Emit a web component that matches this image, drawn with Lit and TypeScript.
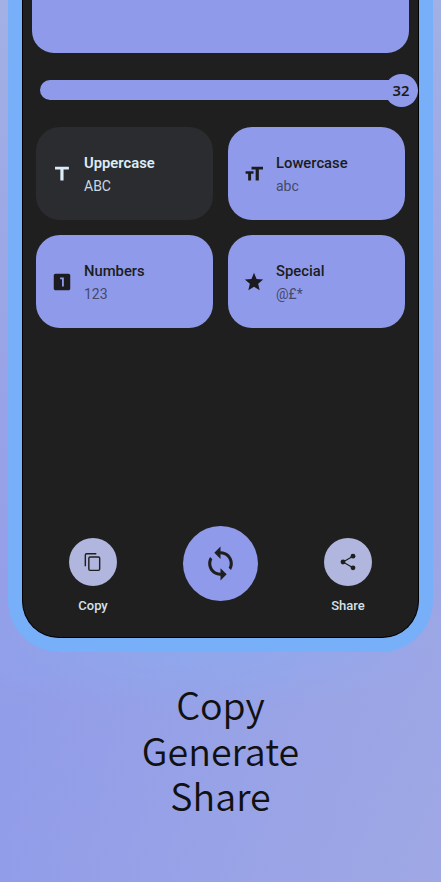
import { LitElement, html, css, svg } from "lit";
import { customElement, property } from "lit/decorators.js";

const icons: Record<string, unknown> = {
  title: svg`<path d="M4.400 4v3.200h5.800v12h3.500v-12h5.800V4z"/>`,
  size: svg`<path d="M9.300 4v3.200h4.500v12h3.500v-12h4.500V4H9.300zm-6.500 7.800h2.800v7.400h3.200v-7.400H11.500V9H2.800z"/>`,
  one: svg`<path d="M19 3H5c-1.100 0-2 .9-2 2v14c0 1.100.9 2 2 2h14c1.100 0 2-.9 2-2V5c0-1.100-.9-2-2-2zm-5 14h-2V9h-2V7h4v10z"/>`,
  star: svg`<path d="M12 17.270L18.180 21l-1.640-7.030L22 9.240l-7.190-.61L12 2 9.190 8.630 2 9.240l5.460 4.730L5.820 21z"/>`,
  copy: svg`<g fill="none" stroke="currentColor" stroke-width="1.700"><path d="M2.800 17V3.500c0-.9.6-1.500 1.500-1.500H16"/><rect x="7" y="6" width="13" height="16" rx="1.500"/></g>`,
  sync: svg`<path d="M12 4V1L8 5l4 4V6c3.310 0 6 2.690 6 6 0 1.010-.25 1.970-.7 2.800l1.460 1.460C19.540 15.030 20 13.570 20 12c0-4.420-3.580-8-8-8zm0 14c-3.310 0-6-2.690-6-6 0-1.010.25-1.970.7-2.800L5.240 7.740C4.460 8.970 4 10.430 4 12c0 4.420 3.580 8 8 8v3l4-4-4-4v3z"/>`,
  share: svg`<path fill="none" stroke="currentColor" stroke-width="1.400" d="M18 5L6 12l12 7"/><circle cx="18" cy="5" r="2.900"/><circle cx="6" cy="12" r="2.900"/><circle cx="18" cy="19" r="2.900"/>`,
};

@customElement("md-icon")
class MdIcon extends LitElement {
  @property() name = "";
  static styles = css`
    :host { display: block; flex: none; }
    svg { display: block; width: 100%; height: 100%; fill: currentColor; }
  `;
  render() {
    return html`<svg viewBox="0 0 24 24">${icons[this.name]}</svg>`;
  }
}

@customElement("option-card")
class OptionCard extends LitElement {
  @property() icon = "";
  @property() heading = "";
  @property() sample = "";
  @property({ type: Boolean, reflect: true }) off = false;
  static styles = css`
    :host {
      display: flex; align-items: center; box-sizing: border-box;
      height: 93px; padding: 0 0 0 15px; border-radius: 24px;
      background: #8f9bea; color: #1c1c20;
      font-family: Roboto, sans-serif;
    }
    :host([off]) { background: #2b2c30; color: #dcecf8; }
    .icon { width: 22px; height: 22px; margin-right: 11px; }
    .text { padding-top: 2px; }
    .heading { font-size: 14.800px; line-height: 23px; font-weight: 500; }
    .sample { font-size: 14px; line-height: 22px; color: #44496b; }
    :host([off]) .heading { font-weight: 600; }
    :host([off]) .sample { color: #c8d8e2; }
  `;
  render() {
    return html`
      <md-icon class="icon" name=${this.icon}></md-icon>
      <div class="text">
        <div class="heading">${this.heading}</div>
        <div class="sample">${this.sample}</div>
      </div>`;
  }
}

@customElement("app-root")
class AppRoot extends LitElement {
  static styles = css`
    :host {
      display: block; height: 882px; overflow: hidden; color: #111;
      background:
        radial-gradient(ellipse 250px 75px at 45% 640px, rgba(138,172,240,.65), rgba(138,172,240,0)),
        linear-gradient(120deg, rgba(166,174,226,0) 45%, rgba(166,174,226,.7)),
        linear-gradient(#a2b0e4 0, #98a2e7 400px, #939ee8 640px, #8f9bea 882px);
    }
    .phone {
      box-sizing: border-box; width: 425px; height: 652px; margin: 0 0 0 8px;
      border: solid #77aff8; border-width: 0 14px 14px;
      border-radius: 0 0 52px 52px; background: #77aff8;
    }
    .screen {
      box-sizing: border-box; height: 638px; padding: 0 13px;
      border: 1px solid #000; border-top: 0;
      border-radius: 0 0 37px 37px; background: #1f1f1f;
    }
    .panel { height: 53px; margin: 0 -4px; border-radius: 0 0 22px 22px; background: #8f9bea; }
    .slider { display: flex; align-items: center; height: 33px; margin: 20.500px -12.500px 20.900px 3.500px; }
    .track { flex: 1; height: 20px; border-radius: 10px 0 0 10px; background: #8f9bea; margin-right: -8px; }
    .thumb {
      width: 33px; height: 33px; border-radius: 50%; background: #8f9bea;
      display: grid; place-items: center; color: #1b1b1b;
      font: 600 14.800px/33px "Noto Sans", sans-serif;
    }
    .grid { display: grid; grid-template-columns: 177px 177px; gap: 15px; }
    .actions { display: flex; justify-content: space-between; margin: 198px 20px 0; }
    .action { width: 74px; display: flex; flex-direction: column; align-items: center; }
    .small { width: 48.500px; height: 48.500px; margin-top: 11.500px; border-radius: 50%; background: #b0b6dd; display: grid; place-items: center; color: #1f1f1f; }
    .small md-icon { width: 20px; height: 20px; }
    .big { width: 75px; height: 75px; border-radius: 50%; background: #8f9bea; display: grid; place-items: center; color: #1f1f1f; }
    .big md-icon { width: 37px; height: 37px; }
    .label { margin-top: 10.500px; color: #d3e2ea; font: 500 13px/18px Roboto, sans-serif; }
    .caption {
      margin: 29px 0 0; text-align: center; white-space: pre-line;
      font: 350 37.600px/45.500px "Noto Sans CJK SC", sans-serif;
    }
  `;
  render() {
    return html`
      <div class="phone">
        <div class="screen">
          <div class="panel"></div>
          <div class="slider"><div class="track"></div><div class="thumb">32</div></div>
          <div class="grid">
            <option-card off icon="title" heading="Uppercase" sample="ABC"></option-card>
            <option-card icon="size" heading="Lowercase" sample="abc"></option-card>
            <option-card icon="one" heading="Numbers" sample="123"></option-card>
            <option-card icon="star" heading="Special" sample="@£*"></option-card>
          </div>
          <div class="actions">
            <div class="action"><div class="small"><md-icon name="copy"></md-icon></div><div class="label">Copy</div></div>
            <div class="big"><md-icon name="sync"></md-icon></div>
            <div class="action"><div class="small"><md-icon name="share"></md-icon></div><div class="label">Share</div></div>
          </div>
        </div>
      </div>
      <p class="caption">${"Copy\nGenerate\nShare"}</p>`;
  }
}
